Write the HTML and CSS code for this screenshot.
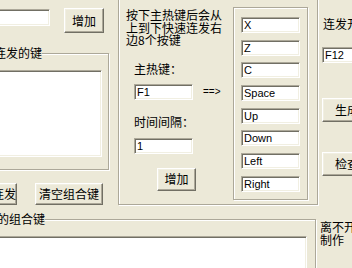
FILE: index.html
```html
<!DOCTYPE html>
<html>
<head>
<meta charset="utf-8">
<link rel="stylesheet" href="styles.css">
</head>
<body>
<div class="win">
  <div class="main">
    <div class="upper">
      <div class="col-a">
        <div class="toprow">
          <div class="edit edit-top"></div>
          <div class="btn btn-add-top">增加</div>
        </div>
        <fieldset class="group group-keys">
          <legend class="legend legend-keys">需连发的键</legend>
          <div class="listbox list-keys"></div>
        </fieldset>
        <div class="btnrow">
          <div class="btn btn-start">开始连发</div>
          <div class="btn btn-clear">清空组合键</div>
        </div>
      </div>
      <div class="frame">
        <div class="mid">
          <div class="desc">按下主热键后会从<br>上到下快速连发右<br>边8个按键</div>
          <div class="lbl lbl-hot">主热键：</div>
          <div class="f1row">
            <div class="edit edit-mid">F1</div>
            <div class="arrow">==&gt;</div>
          </div>
          <div class="lbl lbl-int">时间间隔：</div>
          <div class="edit edit-mid edit-int">1</div>
          <div class="btn btn-add-mid">增加</div>
        </div>
        <div class="keys">
          <div class="edit edit-key">X</div>
          <div class="edit edit-key">Z</div>
          <div class="edit edit-key">C</div>
          <div class="edit edit-key">Space</div>
          <div class="edit edit-key">Up</div>
          <div class="edit edit-key">Down</div>
          <div class="edit edit-key">Left</div>
          <div class="edit edit-key">Right</div>
        </div>
      </div>
    </div>
    <fieldset class="group group-combo">
      <legend class="legend legend-combo">选中的组合键</legend>
      <div class="listbox list-combo"></div>
    </fieldset>
  </div>
  <div class="col-c">
    <div class="text-switch">连发开关：</div>
    <div class="edit edit-f12">F12</div>
    <div class="btn btn-side btn-gen">生成</div>
    <div class="btn btn-side btn-check">检查</div>
    <div class="text-author">离不开你<br>制作</div>
  </div>
</div>
</body>
</html>
```

FILE: styles.css
```css
* { box-sizing: border-box; margin: 0; padding: 0; }
html, body { width: 352px; height: 268px; overflow: hidden; background: #ECE9D8; }
body { font-family: "Noto Sans CJK SC", sans-serif; font-size: 12px; color: #000; }

.win { display: flex; width: 352px; height: 268px; overflow: hidden; }
.main { flex: none; width: 347px; margin-left: -30px; display: flex; flex-direction: column; }
.upper { display: flex; height: 206px; flex: none; }

/* common controls */
.edit {
  background: #fff;
  border: 1px solid;
  border-color: #ACA899 #fff #fff #ACA899;
  box-shadow: inset 1px 1px #716F64, inset -1px -1px #F1EFE2;
  font-family: "Liberation Sans", Arial, sans-serif;
  font-size: 11px;
  line-height: 12px;
  padding-left: 2px;
  display: flex;
  align-items: center;
  white-space: nowrap;
  overflow: hidden;
}
.listbox {
  background: #fff;
  border: 1px solid;
  border-color: #ACA899 #fff #fff #ACA899;
  box-shadow: inset 1px 1px #716F64, inset -1px -1px #F1EFE2;
}
.btn {
  background: #ECE9D8;
  border: 1px solid;
  border-color: #fff #716F64 #716F64 #fff;
  box-shadow: inset -1px -1px #ACA899, inset 1px 1px #F1EFE2;
  display: flex;
  align-items: center;
  justify-content: center;
  white-space: nowrap;
  line-height: 14px;
  flex: none;
}
.group {
  border: 1px solid #ACA899;
  box-shadow: 1px 1px #fff, inset 1px 1px #fff;
  padding: 0;
  margin: 0;
  min-width: 0;
}
.legend {
  padding: 0;
  line-height: 14px;
  background: #ECE9D8;
  white-space: nowrap;
}

/* left column */
.col-a { width: 140px; flex: none; display: flex; flex-direction: column; }
.toprow { display: flex; align-items: flex-start; padding-top: 8px; height: 33px; }
.edit-top { margin-top: 1px; margin-left: 5px; width: 75px; height: 17px; }
.btn-add-top { margin-left: 14px; width: 40px; height: 25px; }

.group-keys { margin-top: 13px; margin-left: 2px; width: 137px; padding-bottom: 12px; }
.legend-keys { margin-left: 9px; }
.list-keys { margin-top: 10px; margin-left: 7px; width: 122px; height: 87px; }

.btnrow { display: flex; margin-top: 13px; }
.btn-start { margin-left: -3px; width: 50px; height: 22px; }
.btn-clear { margin-left: 18px; width: 68px; height: 22px; }

/* middle frame */
.frame {
  flex: none;
  margin-left: 8px;
  margin-top: -4px;
  width: 200px;
  height: 209px;
  border: 1px solid #ACA899;
  box-shadow: 1px 1px #fff, inset 1px 1px #fff;
  display: flex;
}
.mid { width: 110px; flex: none; padding-left: 7px; padding-top: 12px; display: flex; flex-direction: column; align-items: flex-start; }
.desc { line-height: 12.5px; white-space: nowrap; }
.lbl { margin-left: 8px; line-height: 14px; white-space: nowrap; }
.lbl-hot { margin-top: 15px; }
.f1row { display: flex; align-items: center; margin-top: 8px; margin-left: 8px; }
.edit-mid { width: 59px; height: 16px; }
.arrow { margin-left: 10px; font-family: "Liberation Sans", Arial, sans-serif; font-size: 10px; }
.lbl-int { margin-top: 15px; }
.edit-int { margin-top: 9px; margin-left: 8px; }
.btn-add-mid { margin-top: 14px; margin-left: 31px; width: 39px; height: 23px; }

.keys {
  flex: none;
  margin-left: 4px;
  margin-top: 10px;
  width: 75px;
  height: 193px;
  border: 1px solid #ACA899;
  box-shadow: 1px 1px #fff, inset 1px 1px #fff;
  padding: 9px 0 0 7px;
  display: flex;
  flex-direction: column;
  gap: 6.7px;
}
.edit-key { width: 59px; height: 16px; flex: none; }

/* bottom group */
.group-combo { margin-top: 6px; margin-left: 2px; width: 344px; }
.legend-combo { margin-left: 0; }
.list-combo { margin-top: 10px; margin-left: 7px; width: 327px; height: 60px; }

/* right column */
.col-c { flex: none; width: 60px; margin-left: 4px; display: flex; flex-direction: column; align-items: flex-start; }
.text-switch { padding-top: 17px; margin-left: 2px; line-height: 14px; white-space: nowrap; }
.edit-f12 { margin-top: 16px; margin-left: 1px; width: 60px; height: 16px; }
.btn-side { margin-left: 1px; width: 50px; height: 24px; }
.btn-gen { margin-top: 35px; }
.btn-check { margin-top: 30px; }
.text-author { margin-top: 44px; margin-left: -1px; line-height: 13px; white-space: nowrap; }
```
